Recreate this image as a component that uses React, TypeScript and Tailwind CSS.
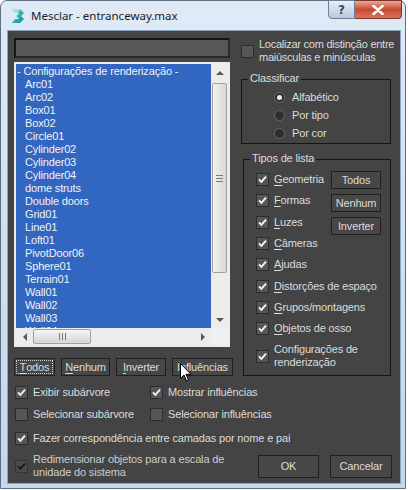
import React from 'react'
import clsx from 'clsx'

const items = [
  'Arc01', 'Arc02', 'Box01', 'Box02', 'Circle01', 'Cylinder02', 'Cylinder03', 'Cylinder04',
  'dome struts', 'Double doors', 'Grid01', 'Line01', 'Loft01', 'PivotDoor06', 'Sphere01',
  'Terrain01', 'Wall01', 'Wall02', 'Wall03', 'Wall04',
]

function Check({ checked, disabled }: { checked?: boolean; disabled?: boolean }) {
  return (
    <span
      className={clsx(
        'flex h-[13px] w-[13px] shrink-0 items-center justify-center border',
        disabled ? 'border-[#353535] bg-[#4b4b4b]' : 'border-[#2c2c2c] bg-[#565656]',
      )}
    >
      {checked && (
        <svg width="9" height="9" viewBox="0 0 9 9">
          <path d="M1 4.3 L3.4 6.8 L8 1.6" stroke={disabled ? '#1a1a1a' : '#f4f4f4'} strokeWidth="1.9" fill="none" />
        </svg>
      )}
    </span>
  )
}

function Radio({ on }: { on?: boolean }) {
  return (
    <span className="flex h-[11px] w-[11px] shrink-0 items-center justify-center rounded-full border border-[#6a6a6a] bg-[#2e2e2e]">
      {on && <span className="h-[5px] w-[5px] rounded-full bg-[#e8e8e8]" />}
    </span>
  )
}

function Btn({ children, className }: { children: React.ReactNode; className?: string }) {
  return (
    <div
      className={clsx(
        'flex h-[18px] shrink-0 items-center justify-center border border-[#202020] bg-[#474747] leading-none text-[#dcdcdc]',
        className,
      )}
    >
      {children}
    </div>
  )
}

function U({ c }: { c: string }) {
  return <span className="underline underline-offset-2">{c}</span>
}

function Group({ label, className, children }: { label: string; className?: string; children: React.ReactNode }) {
  return (
    <div className={clsx('relative border border-[#151515]', className)}>
      {/* legend sits over the top border */}
      <span className="absolute -top-[8px] left-[6px] bg-[#444444] px-[2px] leading-[13px]">{label}</span>
      {children}
    </div>
  )
}

function Arrow({ dir }: { dir: 'up' | 'down' | 'left' | 'right' }) {
  const d = {
    up: 'M0 5 L4 1 L8 5 Z',
    down: 'M0 1 L4 5 L8 1 Z',
    left: 'M5 0 L1 4 L5 8 Z',
    right: 'M1 0 L5 4 L1 8 Z',
  }[dir]
  const vertical = dir === 'up' || dir === 'down'
  return (
    <svg width={vertical ? 8 : 6} height={vertical ? 6 : 8} viewBox={vertical ? '0 0 8 6' : '0 0 6 8'}>
      <path d={d} fill="#5a5a5a" />
    </svg>
  )
}

export default function App() {
  const tipos: [string, string][] = [
    ['G', 'eometria'],
    ['F', 'ormas'],
    ['L', 'uzes'],
    ['C', 'âmeras'],
    ['A', 'judas'],
    ['D', 'istorções de espaço'],
    ['G', 'rupos/montagens'],
    ['O', 'bjetos de osso'],
  ]

  return (
    <div className="relative h-[490px] w-[408px] bg-white font-['Liberation_Sans',Arial,sans-serif] text-[11px] tracking-[-0.15px] text-[#dcdcdc]">
      {/* Window frame */}
      <div className="flex h-[489px] w-[406px] flex-col rounded-t-[7px] border border-[#5e6f82] bg-gradient-to-b from-[#dfeaf6] to-[#c3d7ed] pl-[6px] pr-[4px] pb-[4px]">
        {/* Title bar */}
        <div className="flex h-[29px] shrink-0 items-start">
          <div className="mt-[7px] ml-[4px] flex items-center gap-[6px]">
            <svg width="14" height="16" viewBox="0 0 14 16">
              <defs>
                <linearGradient id="tg" x1="0" y1="0" x2="1" y2="1">
                  <stop offset="0" stopColor="#5fd6d2" />
                  <stop offset="1" stopColor="#0c8d93" />
                </linearGradient>
              </defs>
              <path d="M1 1 L9 1 L13 5 L10 8 L13 11 L9 15 L1 15 L4 11 L7 11 L8 10 L5 8 L8 6 L7 5 L4 5 Z" fill="url(#tg)" />
              <path d="M1 1 L4 5 L7 5 L9 1 Z" fill="#9be7e2" />
            </svg>
            <span className="font-['Noto_Sans',sans-serif] text-[11.5px] leading-none tracking-normal text-[#1b1b1b]">
              Mesclar - entranceway.max
            </span>
          </div>
          <div className="ml-auto mr-[-1px] mt-[-1px] flex">
            <div className="flex h-[19px] w-[27px] items-center justify-center rounded-bl-[4px] border border-[#6e7f95] bg-gradient-to-b from-[#e8f0f9] via-[#cfdcec] to-[#b6c9df] font-['DejaVu_Sans',sans-serif] text-[12px] font-bold text-[#3a4a5c]">
              ?
            </div>
            <div className="flex h-[19px] w-[47px] items-center justify-center rounded-br-[4px] border border-l-0 border-[#7d3528] bg-gradient-to-b from-[#e7a99a] via-[#c9472f] to-[#d9735c]">
              <svg width="12" height="10" viewBox="0 0 12 10">
                <path d="M1.5 1 L10.5 9 M10.5 1 L1.5 9" stroke="#fff" strokeWidth="2.6" strokeLinecap="round" />
              </svg>
            </div>
          </div>
        </div>

        {/* Client area */}
        <div className="flex h-[454px] w-[394px] flex-col border border-[#8fa4bb] bg-[#444444]">
          <div className="flex pl-[6px] pt-[7px]">
            {/* Left column */}
            <div className="flex w-[216px] shrink-0 flex-col">
              <div className="h-[20px] border-2 border-t-[#151515] border-l-[#151515] border-b-[#2a2a2a] border-r-[#2a2a2a] bg-[#575757]" />
              <div className="mt-[4px] flex h-[285px] flex-col border-2 border-[#ececec]">
                <div className="flex h-[264px]">
                  <div className="flex-1 overflow-hidden bg-[#3166c1] pt-[1px] text-[#f2f2f2]">
                    <div className="h-[13px] pl-[1px] leading-[13px]">- Configurações de renderização -</div>
                    {items.map((it) => (
                      <div key={it} className="h-[13px] pl-[9px] leading-[13px]">
                        {it}
                      </div>
                    ))}
                  </div>
                  {/* Vertical scrollbar */}
                  <div className="flex w-[17px] flex-col bg-[#ececec]">
                    <div className="flex h-[17px] items-center justify-center">
                      <Arrow dir="up" />
                    </div>
                    <div className="mx-[1px] mt-[2px] flex h-[190px] flex-col items-center justify-center gap-[2px] rounded-[2px] border border-[#a0a0a0] bg-gradient-to-r from-[#f4f4f4] to-[#d6d6d6]">
                      <span className="h-px w-[7px] bg-[#7a7a7a]" />
                      <span className="h-px w-[7px] bg-[#7a7a7a]" />
                      <span className="h-px w-[7px] bg-[#7a7a7a]" />
                    </div>
                    <div className="mt-auto flex h-[17px] items-center justify-center">
                      <Arrow dir="down" />
                    </div>
                  </div>
                </div>
                {/* Horizontal scrollbar */}
                <div className="flex h-[17px]">
                  <div className="flex flex-1 items-center bg-[#ececec]">
                    <div className="flex w-[17px] items-center justify-center">
                      <Arrow dir="left" />
                    </div>
                    <div className="flex h-[15px] w-[58px] items-center justify-center gap-[2px] rounded-[2px] border border-[#a0a0a0] bg-gradient-to-b from-[#f4f4f4] to-[#d6d6d6]">
                      <span className="h-[7px] w-px bg-[#7a7a7a]" />
                      <span className="h-[7px] w-px bg-[#7a7a7a]" />
                      <span className="h-[7px] w-px bg-[#7a7a7a]" />
                    </div>
                    <div className="ml-auto flex w-[17px] items-center justify-center">
                      <Arrow dir="right" />
                    </div>
                  </div>
                  <div className="w-[17px] bg-[#f0f0f0]" />
                </div>
              </div>
              <div className="mt-[11px] flex gap-[6px]">
                <Btn className="w-[41px]">
                  <span className="flex h-[14px] w-[37px] items-center justify-center border border-dotted border-[#cfcfcf]">
                    <U c="T" />odos
                  </span>
                </Btn>
                <Btn className="w-[49px]">
                  <U c="N" />enhum
                </Btn>
                <Btn className="w-[50px]">
                  <U c="I" />nverter
                </Btn>
                <Btn className="w-[61px]">Influências</Btn>
              </div>
            </div>

            {/* Right column */}
            <div className="ml-[11px] flex w-[150px] flex-col">
              <div className="flex items-center gap-[5px] whitespace-nowrap leading-[13px]">
                <Check />
                <span className="tracking-[-0.25px]">
                  Localizar com distinção entre
                  <br />
                  maiúsculas e minúsculas
                </span>
              </div>
              <Group label="Classificar" className="mt-[15px] h-[65px] pl-[32px] pt-[11px]">
                <div className="flex flex-col gap-[5px]">
                  <div className="flex h-[13px] items-center gap-[7px]">
                    <Radio on />
                    Alfabético
                  </div>
                  <div className="flex h-[13px] items-center gap-[7px]">
                    <Radio />
                    Por tipo
                  </div>
                  <div className="flex h-[13px] items-center gap-[7px]">
                    <Radio />
                    Por cor
                  </div>
                </div>
              </Group>
              <Group label="Tipos de lista" className="mt-[15px] ml-[2px] h-[217px] pl-[12px] pt-[9px]">
                <div className="flex flex-col">
                  {tipos.map(([a, b], i) => (
                    <div key={i} className="flex h-[21.3px] items-center gap-[5px] leading-[13px]">
                      <Check checked />
                      <span>
                        <U c={a} />
                        {b}
                      </span>
                    </div>
                  ))}
                  <div className="mt-[4px] flex items-center gap-[5px] leading-[13px]">
                    <Check checked />
                    <span>
                      Configurações de
                      <br />
                      renderização
                    </span>
                  </div>
                </div>
                <div className="absolute top-[11px] right-[9px] flex flex-col gap-[5px]">
                  <Btn className="w-[50px]">Todos</Btn>
                  <Btn className="w-[50px]">Nenhum</Btn>
                  <Btn className="w-[50px]">Inverter</Btn>
                </div>
              </Group>
            </div>
          </div>

          {/* Option checkboxes */}
          <div className="mt-[8px] flex flex-col pl-[7px] leading-[13px]">
            <div className="flex h-[16px] items-center">
              <div className="flex w-[135px] items-center gap-[5px]">
                <Check checked />
                Exibir subárvore
              </div>
              <div className="flex items-center gap-[5px]">
                <Check checked />
                Mostrar influências
              </div>
            </div>
            <div className="mt-[6px] flex h-[16px] items-center">
              <div className="flex w-[135px] items-center gap-[5px]">
                <Check />
                Selecionar subárvore
              </div>
              <div className="flex items-center gap-[5px]">
                <Check />
                Selecionar influências
              </div>
            </div>
            <div className="mt-[8px] flex h-[16px] items-center gap-[5px]">
              <Check checked />
              Fazer correspondência entre camadas por nome e pai
            </div>
            <div className="mt-[7px] flex items-center pr-[8px]">
              <div className="flex items-center gap-[5px] text-[#cdcdcd]">
                <Check checked disabled />
                <span>
                  Redimensionar objetos para a escala de
                  <br />
                  unidade do sistema
                </span>
              </div>
              <div className="ml-auto flex gap-[11px]">
                <Btn className="h-[23px] w-[61px]">OK</Btn>
                <Btn className="h-[23px] w-[62px]">Cancelar</Btn>
              </div>
            </div>
          </div>
        </div>
      </div>

      {/* Mouse cursor */}
      <svg className="absolute left-[180px] top-[363px]" width="12" height="19" viewBox="0 0 12 19">
        <path d="M0.5 0.5 L0.5 15.5 L4 12 L6.5 18 L8.5 17 L6 11.3 L11 11.3 Z" fill="#fff" stroke="#000" strokeWidth="1" />
      </svg>
    </div>
  )
}
